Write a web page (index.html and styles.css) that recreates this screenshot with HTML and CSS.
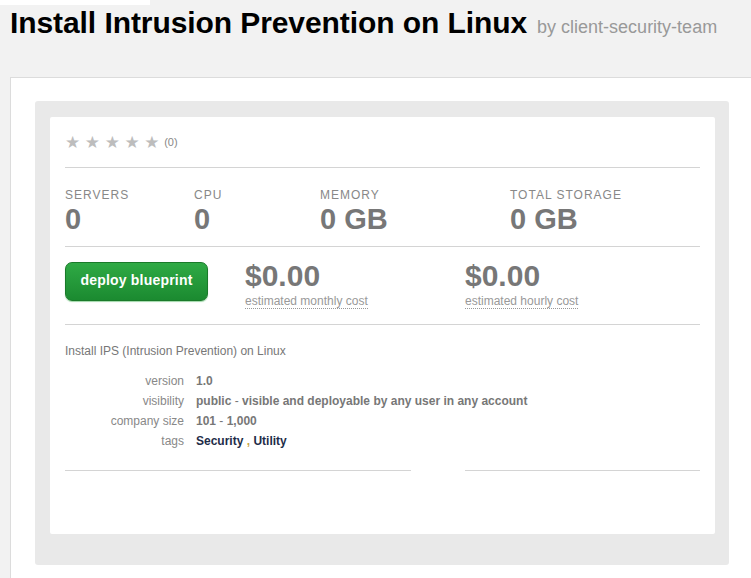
FILE: index.html
```html
<!DOCTYPE html>
<html>
<head>
<meta charset="utf-8">
<link rel="stylesheet" href="styles.css">
</head>
<body>
<div class="topstrip"></div>
<header class="head">
  <h1 class="title">Install Intrusion Prevention on Linux</h1>
  <span class="by">by client-security-team</span>
</header>
<main class="panel">
  <div class="well">
    <div class="card">
      <div class="rating">
        <span class="stars">★★★★★</span>
        <span class="count">(0)</span>
      </div>
      <div class="stats">
        <div class="stat s1"><div class="lbl">SERVERS</div><div class="val">0</div></div>
        <div class="stat s2"><div class="lbl">CPU</div><div class="val">0</div></div>
        <div class="stat s3"><div class="lbl">MEMORY</div><div class="val">0 GB</div></div>
        <div class="stat s4"><div class="lbl">TOTAL STORAGE</div><div class="val">0 GB</div></div>
      </div>
      <div class="deploy">
        <div class="btncol"><button class="btn">deploy blueprint</button></div>
        <div class="cost c1"><div class="amt">$0.00</div><span class="note">estimated monthly cost</span></div>
        <div class="cost c2"><div class="amt">$0.00</div><span class="note">estimated hourly cost</span></div>
      </div>
      <div class="desc">
        <p class="summary">Install IPS (Intrusion Prevention) on Linux</p>
        <div class="meta">
          <div class="k">version</div><div class="v">1.0</div>
          <div class="k">visibility</div><div class="v">public <span class="dash">-</span> visible and deployable by any user in any account</div>
          <div class="k">company size</div><div class="v">101 <span class="dash">-</span> 1,000</div>
          <div class="k">tags</div><div class="v tags">Security <span class="comma">,</span> Utility</div>
        </div>
      </div>
      <div class="footlines">
        <div class="fl left"></div>
        <div class="fl right"></div>
      </div>
    </div>
  </div>
</main>
</body>
</html>
```
FILE: styles.css
```css
html, body { margin: 0; padding: 0; }
body {
  background: #f2f2f2;
  font-family: "Liberation Sans", Arial, sans-serif;
  width: 751px;
  height: 578px;
  overflow: hidden;
  position: relative;
}
.topstrip {
  position: absolute;
  left: 0; top: 0;
  width: 150px; height: 5px;
  background: #fff;
}
.head {
  display: flex;
  align-items: baseline;
  padding: 6px 0 0 10px;
  height: 68px;
  box-sizing: border-box;
}
.title {
  margin: 0;
  font-size: 30px;
  font-weight: bold;
  color: #000;
  letter-spacing: -0.08px;
  line-height: 34px;
}
.by {
  margin-left: 10px;
  font-size: 18px;
  color: #999;
}
.panel {
  margin: 9px 0 0 10px;
  background: #fff;
  border-top: 1px solid #dcdcdc;
  border-left: 1px solid #dcdcdc;
  padding: 23px 0 0 24px;
  height: 520px;
  box-sizing: border-box;
}
.well {
  width: 694px;
  height: 464px;
  box-sizing: border-box;
  background: #e9e9e9;
  border-radius: 3px;
  padding: 16px 14px 0 15px;
}
.card {
  background: #fff;
  height: 417px;
  box-sizing: border-box;
  padding: 0 15px;
  border-radius: 2px;
}
.rating {
  height: 51px;
  box-sizing: border-box;
  padding-top: 16px;
  border-bottom: 1px solid #d4d4d4;
  display: flex;
  align-items: flex-start;
}
.stars {
  color: #bdbdbd;
  font-size: 17px;
  letter-spacing: 4.6px;
  font-family: "DejaVu Sans", sans-serif;
  line-height: 18px;
}
.count {
  font-size: 11px;
  color: #888;
  margin-left: 0;
  line-height: 18px;
}
.stats {
  display: flex;
  height: 79px;
  box-sizing: border-box;
  padding-top: 20px;
  border-bottom: 1px solid #d4d4d4;
}
.stat .lbl {
  font-size: 12px;
  letter-spacing: 1px;
  color: #888;
  line-height: 14px;
}
.stat .val {
  font-size: 29px;
  font-weight: bold;
  color: #777;
  line-height: 30px;
  margin-top: 2px;
}
.s1 { width: 129px; }
.s2 { width: 126px; }
.s3 { width: 190px; }
.deploy {
  display: flex;
  height: 78px;
  box-sizing: border-box;
  padding-top: 15px;
  border-bottom: 1px solid #d4d4d4;
}
.btncol { width: 180px; }
.btn {
  width: 143px;
  height: 39px;
  border: 1px solid #1a7a2a;
  border-radius: 7px;
  background: linear-gradient(#2faa45, #1b8a30);
  color: #fff;
  font-family: "Liberation Sans", Arial, sans-serif;
  font-weight: bold;
  font-size: 14px;
  letter-spacing: 0.2px;
  box-shadow: 0 1px 1px #9fd8a8;
  padding: 0 0 3px 0;
}
.cost { width: 220px; }
.amt {
  font-size: 30px;
  font-weight: bold;
  color: #777;
  line-height: 30px;
  margin-top: -1px;
}
.note {
  font-size: 12px;
  color: #999;
  border-bottom: 1px dotted #999;
  line-height: 14px;
  display: inline-block;
  margin-top: 3px;
}
.desc { padding-top: 19px; }
.summary {
  margin: 0 0 16px 0;
  font-size: 12px;
  color: #777;
  line-height: 14px;
}
.meta {
  display: grid;
  grid-template-columns: 119px auto;
  column-gap: 12px;
  row-gap: 6px;
  font-size: 12px;
  line-height: 14px;
}
.k { text-align: right; color: #888; }
.v { font-weight: bold; color: #777; }
.dash { font-weight: normal; }
.tags { color: #1e2c48; }
.comma { color: #c9a64a; }
.footlines {
  display: flex;
  justify-content: space-between;
  margin-top: 22px;
}
.fl { border-top: 1px solid #d4d4d4; }
.fl.left { width: 346px; }
.fl.right { width: 235px; }
```
